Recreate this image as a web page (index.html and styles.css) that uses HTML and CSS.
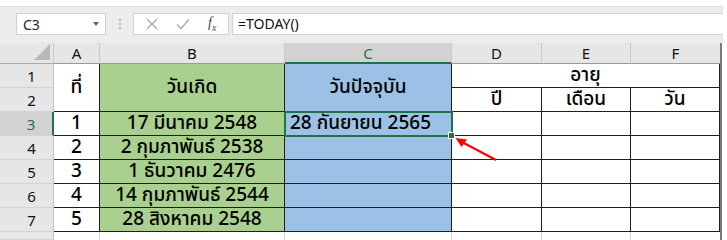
FILE: index.html
```html
<!DOCTYPE html>
<html lang="th">
<head>
    <meta charset="UTF-8">
    <title>TODAY</title>
    <link rel="stylesheet" href="styles.css">
</head>
<body>
    <div class="window">
        <div class="formula-bar">
            <div class="name-box"><span>C3</span><span class="caret"></span></div>
            <div class="grip"><i></i><i></i><i></i></div>
            <div class="fx-box">
                <svg class="icon" width="12" height="12" viewBox="0 0 12 12"><path d="M1 1 L11 11 M11 1 L1 11" stroke="#a6a6a6" stroke-width="1.2" fill="none"/></svg>
                <svg class="icon" width="14" height="12" viewBox="0 0 14 12"><path d="M1 6.5 L5 10.5 L13 1.5" stroke="#a6a6a6" stroke-width="1.3" fill="none"/></svg>
                <span class="fx">f<sub>x</sub></span>
            </div>
            <div class="formula">=TODAY()</div>
        </div>

        <div class="sheet">
            <!-- column headers -->
            <div class="corner"><span class="tri"></span></div>
            <div class="col-head">A</div>
            <div class="col-head">B</div>
            <div class="col-head sel">C</div>
            <div class="col-head">D</div>
            <div class="col-head">E</div>
            <div class="col-head last">F</div>

            <!-- rows 1-2 -->
            <div class="row-head">1</div>
            <div class="cell span2">ที่</div>
            <div class="cell green span2">วันเกิด</div>
            <div class="cell blue span2">วันปัจจุบัน</div>
            <div class="cell wide">อายุ</div>
            <div class="row-head">2</div>
            <div class="cell">ปี</div>
            <div class="cell">เดือน</div>
            <div class="cell">วัน</div>

            <!-- data -->
            <div class="row-head sel">3</div>
            <div class="cell">1</div>
            <div class="cell green">17 มีนาคม 2548</div>
            <div class="cell blue active">28 กันยายน 2565<span class="handle"></span></div>
            <div class="cell"></div>
            <div class="cell"></div>
            <div class="cell"></div>

            <div class="row-head">4</div>
            <div class="cell">2</div>
            <div class="cell green">2 กุมภาพันธ์ 2538</div>
            <div class="cell blue"></div>
            <div class="cell"></div>
            <div class="cell"></div>
            <div class="cell"></div>

            <div class="row-head">5</div>
            <div class="cell">3</div>
            <div class="cell green">1 ธันวาคม 2476</div>
            <div class="cell blue"></div>
            <div class="cell"></div>
            <div class="cell"></div>
            <div class="cell"></div>

            <div class="row-head">6</div>
            <div class="cell">4</div>
            <div class="cell green">14 กุมภาพันธ์ 2544</div>
            <div class="cell blue"></div>
            <div class="cell"></div>
            <div class="cell"></div>
            <div class="cell"></div>

            <div class="row-head">7</div>
            <div class="cell">5</div>
            <div class="cell green">28 สิงหาคม 2548</div>
            <div class="cell blue"></div>
            <div class="cell"></div>
            <div class="cell"></div>
            <div class="cell"></div>

            <!-- row 8, cut off -->
            <div class="row-head"></div>
            <div class="grid-cell"></div>
            <div class="grid-cell"></div>
            <div class="grid-cell"></div>
            <div class="grid-cell"></div>
            <div class="grid-cell"></div>
            <div class="grid-cell last"></div>

            <svg class="arrow" width="60" height="40" viewBox="0 0 60 40">
                <path d="M42 23 L6 4" stroke="#ff0000" stroke-width="2.2" fill="none"/>
                <path d="M1.5 1 L13 2.5 L7.5 10 Z" fill="#ff0000"/>
            </svg>
        </div>
    </div>
</body>
</html>
```

FILE: styles.css
```css
body {
    margin: 0;
    background: #fff;
    font-family: "Noto Sans", sans-serif;
}

.window {
    width: 723px;
    overflow: hidden;
}

/* formula bar */
.formula-bar {
    display: flex;
    align-items: flex-start;
    margin-top: 6px;
    height: 37px;
    padding: 6px 0 0 16px;
    box-sizing: border-box;
    background: #ececec;
    border-top: 1px solid #e0e0e0;
}

.name-box {
    width: 90px;
    height: 22px;
    box-sizing: border-box;
    background: #fff;
    border: 1px solid #d0d0d0;
    display: flex;
    align-items: center;
    justify-content: space-between;
    padding: 0 6px 0 6px;
    font-size: 14px;
    color: #222;
}

.caret {
    width: 0;
    height: 0;
    border-left: 3px solid transparent;
    border-right: 3px solid transparent;
    border-top: 4px solid #666;
}

.grip {
    width: 27px;
    height: 22px;
    display: flex;
    flex-direction: column;
    align-items: center;
    justify-content: center;
    gap: 2px;
}
.grip i {
    display: block;
    width: 2px;
    height: 2px;
    background: #b8b8b8;
}

.fx-box {
    width: 96px;
    height: 22px;
    box-sizing: border-box;
    background: #fff;
    border: 1px solid #d0d0d0;
    display: flex;
    align-items: center;
    gap: 18px;
    padding-left: 12px;
}

.fx {
    font-family: "Liberation Serif", serif;
    font-style: italic;
    font-size: 14px;
    color: #444;
    line-height: 1;
}
.fx sub {
    font-size: 10px;
}

.formula {
    flex: 1;
    margin-left: 3px;
    height: 22px;
    box-sizing: border-box;
    background: #fff;
    border: 1px solid #d0d0d0;
    border-right: none;
    padding-left: 5px;
    font-size: 14px;
    line-height: 20px;
    color: #111;
}

/* sheet grid */
.sheet {
    position: relative;
    display: grid;
    grid-template-columns: 54px 46px 185px 167px 90px 89px 89px;
    grid-template-rows: 21px repeat(7, 24px) 8px;
    width: 720px;
    border-right: 2px solid #7a7a7a;
}

.sheet > div {
    box-sizing: border-box;
}

.corner {
    background: #e6e6e6;
    border-right: 1px solid #c8c8c8;
    border-bottom: 1px solid #ababab;
    position: relative;
}
.tri {
    position: absolute;
    right: 3px;
    bottom: 3px;
    width: 0;
    height: 0;
    border-left: 16px solid transparent;
    border-bottom: 16px solid #b8b8b8;
}

.col-head {
    background: #e6e6e6;
    border-right: 1px solid #c8c8c8;
    border-bottom: 1px solid #9a9a9a;
    display: flex;
    align-items: center;
    justify-content: center;
    font-size: 15px;
    color: #111;
}
.col-head.sel {
    background: #d2d2d2;
    color: #217346;
    border-bottom: 2px solid #217346;
}
.col-head.last {
    border-right: none;
}

.row-head {
    background: #e6e6e6;
    border-right: 1px solid #c0c0c0;
    border-bottom: 1px solid #d4d4d4;
    display: flex;
    align-items: center;
    justify-content: center;
    padding-left: 10px;
    font-size: 15px;
    color: #111;
}
.row-head.sel {
    background: #d2d2d2;
    color: #217346;
    border-right: 2px solid #217346;
}

.cell {
    background: #fff;
    border-right: 1px solid #1e1e1e;
    border-bottom: 1px solid #1e1e1e;
    display: flex;
    align-items: center;
    justify-content: center;
    font-family: Tahoma, "Noto Sans Thai", "Noto Sans", sans-serif;
    font-size: 19px;
    font-weight: 500;
    line-height: 1;
    color: #000;
    white-space: nowrap;
}
.cell.span2 {
    grid-row: span 2;
}
.cell.wide {
    grid-column: span 3;
}
.cell.green {
    background: #a9d08e;
}
.cell.blue {
    background: #9bc2e6;
}

.cell.active {
    position: relative;
    justify-content: flex-start;
    padding-left: 5px;
    outline: 2px solid #217346;
    outline-offset: -1px;
    z-index: 1;
}
.handle {
    position: absolute;
    right: -4px;
    bottom: -4px;
    width: 5px;
    height: 5px;
    background: #217346;
    border: 1px solid #fff;
}

.grid-cell {
    background: #fff;
    border-right: 1px solid #d4d4d4;
}
.grid-cell.last {
    border-right: none;
}

.arrow {
    position: absolute;
    left: 454px;
    top: 94px;
}
```
